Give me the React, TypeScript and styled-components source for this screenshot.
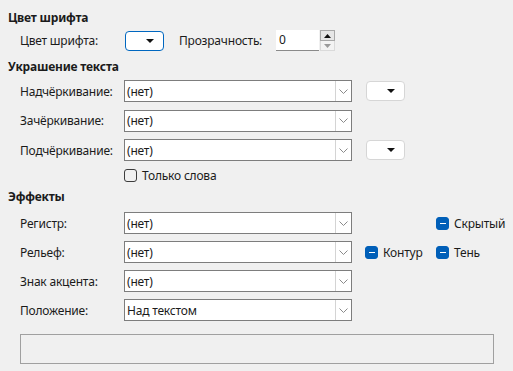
import styled, { createGlobalStyle } from 'styled-components'

const GlobalStyle = createGlobalStyle`
  html, body {
    margin: 0;
    padding: 0;
    background: #f0f0f0;
  }
  body {
    font-family: 'Noto Sans', 'Open Sans', sans-serif;
    font-size: 12px;
    letter-spacing: -0.2px;
    color: #1b1b1b;
  }
`

const Page = styled.div`
  width: 513px;
  height: 371px;
  box-sizing: border-box;
  padding: 10px 0 0 8px;
  display: flex;
  flex-direction: column;
  overflow: hidden;
`

const Heading = styled.div<{ $mt?: number }>`
  height: 16px;
  line-height: 16px;
  font-weight: 700;
  margin-top: ${({ $mt }) => $mt ?? 0}px;
`

const Section = styled.div<{ $mt: number; $gap: number }>`
  display: flex;
  flex-direction: column;
  gap: ${({ $gap }) => $gap}px;
  margin-top: ${({ $mt }) => $mt}px;
  padding-left: 12px;
`

const Row = styled.div`
  display: flex;
  align-items: center;
  height: 22px;
`

const Label = styled.span<{ $w?: number }>`
  width: ${({ $w }) => $w ?? 104}px;
  flex-shrink: 0;
  white-space: nowrap;
`

const ColorButton = styled.div<{ $focused?: boolean; $ml?: number }>`
  width: 39px;
  height: 20px;
  box-sizing: border-box;
  margin-left: ${({ $ml }) => $ml ?? 0}px;
  background: #fff;
  border: 1px solid ${({ $focused }) => ($focused ? '#0067c0' : '#d6d6d6')};
  border-radius: 4px;
  display: flex;
  align-items: center;
  justify-content: flex-end;
  padding-right: 9px;
  flex-shrink: 0;
`

const Triangle = styled.span`
  width: 0;
  height: 0;
  border-left: 4px solid transparent;
  border-right: 4px solid transparent;
  border-top: 4px solid #111;
`

const Spin = styled.div`
  display: flex;
  height: 21px;
  margin-left: 2px;
`

const SpinInput = styled.div`
  width: 43px;
  box-sizing: border-box;
  background: #fff;
  border-bottom: 1px solid #8a8a8a;
  padding-left: 3px;
  line-height: 20px;
`

const SpinButtons = styled.div`
  display: flex;
  flex-direction: column;
  width: 15px;
  margin-left: 1px;
`

const SpinButton = styled.div<{ $disabled?: boolean }>`
  flex: 1;
  box-sizing: border-box;
  display: flex;
  align-items: center;
  justify-content: center;
  background: ${({ $disabled }) => ($disabled ? '#f3f3f3' : '#e6e6e6')};
  border: 1px solid ${({ $disabled }) => ($disabled ? '#dadada' : '#a8a8a8')};
  border-top: ${({ $disabled }) => ($disabled ? 'none' : undefined)};
`

const Combo = styled.div`
  width: 228px;
  height: 22px;
  box-sizing: border-box;
  background: #fff;
  border: 1px solid #7d7d7d;
  display: flex;
  align-items: center;
  flex-shrink: 0;
`

const ComboText = styled.span`
  flex: 1;
  padding-left: 2px;
  white-space: nowrap;
`

const ComboButton = styled.div`
  width: 16px;
  height: 20px;
  box-sizing: border-box;
  border-left: 1px solid #d4d4d4;
  display: flex;
  align-items: center;
  justify-content: center;
`

const CheckRow = styled.div`
  display: flex;
  align-items: center;
  height: 13px;
  padding-left: 104px;
`

const Check = styled.label<{ $ml?: number; $w?: number }>`
  display: flex;
  align-items: center;
  gap: 5px;
  margin-left: ${({ $ml }) => $ml ?? 0}px;
  width: ${({ $w }) => ($w ? `${$w}px` : 'auto')};
  flex-shrink: 0;
  white-space: nowrap;
`

const Box = styled.span<{ $mixed?: boolean }>`
  width: 13px;
  height: 13px;
  box-sizing: border-box;
  border-radius: 3px;
  border: 1px solid ${({ $mixed }) => ($mixed ? '#005fb8' : '#3c3c3c')};
  background: ${({ $mixed }) => ($mixed ? '#005fb8' : 'transparent')};
  display: flex;
  align-items: center;
  justify-content: center;
  flex-shrink: 0;
`

const Dash = styled.span`
  width: 6px;
  height: 1px;
  background: #fff;
`

const Preview = styled.div`
  width: 474px;
  height: 30px;
  box-sizing: border-box;
  margin: 13px 0 0 12px;
  border: 1px solid #a0a0a0;
`

function Chevron() {
  return (
    <svg width="9" height="5" viewBox="0 0 9 5">
      <polyline points="0.5,0.5 4.5,4.5 8.5,0.5" fill="none" stroke="#8a8a8a" strokeWidth="1" />
    </svg>
  )
}

function ComboBox({ value }: { value: string }) {
  return (
    <Combo>
      <ComboText>{value}</ComboText>
      <ComboButton>
        <Chevron />
      </ComboButton>
    </Combo>
  )
}

function CheckBox({ label, mixed, ml, w }: { label: string; mixed?: boolean; ml?: number; w?: number }) {
  return (
    <Check $ml={ml} $w={w}>
      <Box $mixed={mixed}>{mixed && <Dash />}</Box>
      {label}
    </Check>
  )
}

function SpinArrow({ up, color }: { up?: boolean; color: string }) {
  return (
    <svg width="7" height="4" viewBox="0 0 7 4">
      <polygon points={up ? '0,4 7,4 3.5,0' : '0,0 7,0 3.5,4'} fill={color} />
    </svg>
  )
}

export default function App() {
  return (
    <>
      <GlobalStyle />
      <Page>
        <Heading>Цвет шрифта</Heading>
        <Section $mt={4} $gap={0}>
          <Row style={{ height: 21 }}>
            <Label $w={105}>Цвет шрифта:</Label>
            <ColorButton $focused>
              <Triangle />
            </ColorButton>
            <Label $w={95} style={{ marginLeft: 15 }}>
              Прозрачность:
            </Label>
            <Spin>
              <SpinInput>0</SpinInput>
              <SpinButtons>
                <SpinButton>
                  <SpinArrow up color="#111" />
                </SpinButton>
                <SpinButton $disabled>
                  <SpinArrow color="#9a9a9a" />
                </SpinButton>
              </SpinButtons>
            </Spin>
          </Row>
        </Section>

        <Heading $mt={8}>Украшение текста</Heading>
        <Section $mt={5} $gap={7.5}>
          <Row>
            <Label>Надчёркивание:</Label>
            <ComboBox value="(нет)" />
            <ColorButton $ml={14}>
              <Triangle />
            </ColorButton>
          </Row>
          <Row>
            <Label>Зачёркивание:</Label>
            <ComboBox value="(нет)" />
          </Row>
          <Row>
            <Label>Подчёркивание:</Label>
            <ComboBox value="(нет)" />
            <ColorButton $ml={14}>
              <Triangle />
            </ColorButton>
          </Row>
        </Section>
        <Section $mt={8} $gap={0}>
          <CheckRow>
            <CheckBox label="Только слова" />
          </CheckRow>
        </Section>

        <Heading $mt={7}>Эффекты</Heading>
        <Section $mt={7} $gap={7}>
          <Row>
            <Label>Регистр:</Label>
            <ComboBox value="(нет)" />
            <CheckBox label="Скрытый" mixed ml={84} />
          </Row>
          <Row>
            <Label>Рельеф:</Label>
            <ComboBox value="(нет)" />
            <CheckBox label="Контур" mixed ml={13} w={71} />
            <CheckBox label="Тень" mixed />
          </Row>
          <Row>
            <Label>Знак акцента:</Label>
            <ComboBox value="(нет)" />
          </Row>
          <Row>
            <Label>Положение:</Label>
            <ComboBox value="Над текстом" />
          </Row>
        </Section>
        <Preview />
      </Page>
    </>
  )
}
